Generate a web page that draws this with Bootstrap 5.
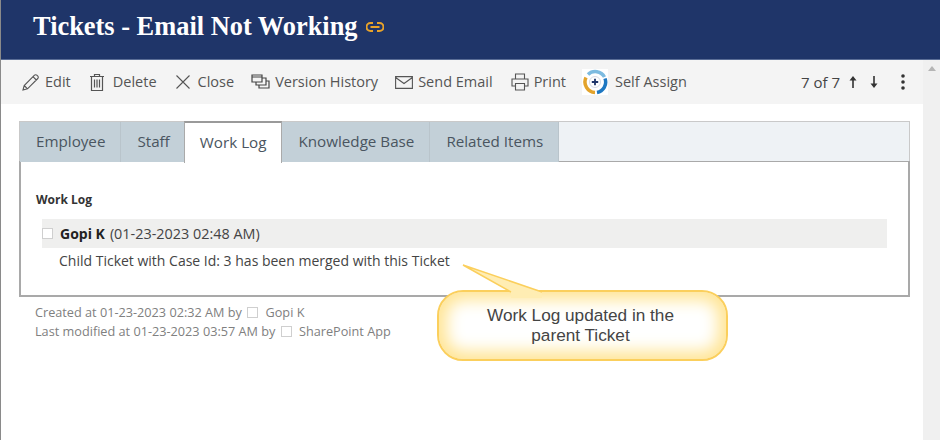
<!DOCTYPE html>
<html lang="en">
<head>
  <meta charset="UTF-8">
  <meta name="viewport" content="width=device-width, initial-scale=1.0">
  <title>Tickets - Email Not Working</title>
  <link href="https://cdn.jsdelivr.net/npm/bootstrap@5.3.3/dist/css/bootstrap.min.css" rel="stylesheet" crossorigin="anonymous">
  <script src="https://cdn.jsdelivr.net/npm/bootstrap@5.3.3/dist/js/bootstrap.bundle.min.js" crossorigin="anonymous"></script>
  <style>
    html, body { height: 440px; overflow: hidden; }
    body { font-family: "Open Sans", "Liberation Sans", sans-serif; color: #444; background: #fff; border-left: 1px solid #8a8a8a; position: relative; }
    .title-bar { height: 60px; background: #1f3569; padding: 0 0 5px 32px; border-bottom: 1px solid #5a6d96; }
    .title-bar h1 { font-family: "Liberation Serif", serif; font-weight: 700; font-size: 26.4px; color: #fff; margin: 0 8px 0 0; }
    .page-wrap { height: 380px; }
    .page-main { width: 922px; }
    .side-scroll { width: 17px; background: #f0f0f0; }
    .scroll-up { width: 0; height: 0; border: 4px solid transparent; border-top: 0; border-bottom: 5px solid #b5b5b5; margin: 6px auto 0; }
    .tool-bar { height: 44px; background: #f4f4f4; padding: 0 18px 0 20px; font-size: 14.5px; color: #555; }
    .tool-item { margin-right: 18px; line-height: 1; white-space: nowrap; }
    .tool-item.tight { margin-right: 17px; }
    .tool-item.tighter { margin-right: 16px; }
    .tool-item svg { margin-right: 5px; }
    .tool-item svg.wide-gap { margin-right: 8px; }
    .tool-item svg.mid-gap { margin-right: 7px; }
    .pager { font-size: 15px; color: #444; }
    .pager svg { margin-left: 13px; }
    .pager svg.up-arrow { margin-left: 9px; }
    .pager svg.more-dots { margin-left: 23px; }
    .tab-area { margin: 17px 13px 0 18px; }
    .tab-strip { height: 41px; background: #eef2f5; border: 1px solid #c9c9c9; border-bottom: 0; }
    .tab-btn { background: #c3d0d8; color: #4a5560; font-size: 15.2px; height: 40px; border-right: 1px solid #b9c4cb; padding: 0 15px 2px 16px; }
    .tab-btn.on { background: #fff; border-top: 2px solid #9a9a9a; border-left: 1px solid #aaa; border-right: 1px solid #aaa; margin: -1px 0 0 -2px; height: 42px; position: relative; z-index: 1; padding: 0 15px 2px 15px; }
    .tab-panel { height: 136px; border: 2px solid #a9a9a9; border-top-width: 1px; padding: 29px 21px 0 15px; margin-top: -1px; }
    .log-head { font-size: 12px; font-weight: 700; color: #333; margin-bottom: 11px; line-height: 17px; }
    .log-row { height: 29px; background: #efefee; margin-left: 6px; font-size: 14.4px; color: #444; }
    .log-row b { color: #222; font-size: 14px; margin-right: 5px; }
    .pic-box { width: 11px; height: 11px; border: 1px solid #cfcfcf; background: #fff; display: inline-block; }
    .log-row .pic-box { margin-right: 7px; }
    .log-text { font-size: 14px; margin: 4px 0 0 23px; line-height: 18px; color: #444; }
    .meta-info { margin: 6px 0 0 16px; font-size: 12.7px; color: #808080; line-height: 19px; }
    .meta-info .pic-box { margin: 0 4px 0 2px; vertical-align: -1px; }
    .callout-box { position: absolute; left: 436px; top: 290px; width: 291px; height: 71px; border: 2px solid #fbcf5c; border-radius: 26px; background: #fff; box-shadow: inset 0 0 16px 8px #ffe596; font-family: "Liberation Sans", sans-serif; font-size: 17.2px; line-height: 20px; color: #444; text-align: center; padding: 13px 34px 0 30px; }
    .callout-tail { position: absolute; left: 455px; top: 260px; }
  </style>
</head>
<body>
  <div class="title-bar d-flex align-items-center">
    <h1>Tickets - Email Not Working</h1>
    <svg width="18" height="10" viewBox="0 0 18 10" fill="none" stroke="#e8a32a" stroke-width="2"><path d="M7 1H4.500a4 4 0 0 0 0 8H7M11 1h2.500a4 4 0 0 1 0 8H11M4.500 5h9"/></svg>
  </div>
  <div class="d-flex page-wrap">
    <div class="page-main">
      <div class="tool-bar d-flex align-items-center">
        <span class="tool-item d-flex align-items-center">
          <svg width="19" height="19" viewBox="0 0 19 19" fill="none" stroke="#555" stroke-width="1.1"><path d="M2 17l1.200-4.500L13.500 2.200a1.600 1.600 0 0 1 2.300 0l1 1a1.600 1.600 0 0 1 0 2.300L6.500 15.800zM3.200 12.500l3.300 3.300M12 3.700l3.300 3.300"/></svg>Edit</span>
        <span class="tool-item d-flex align-items-center">
          <svg class="wide-gap" width="16" height="19" viewBox="0 0 16 19" fill="none" stroke="#555" stroke-width="1.2"><path d="M1 3.500h14M5.500 3.500V1.500h5v2M2.500 3.500v14h11v-14M5.500 6.500v8M8 6.500v8M10.500 6.500v8"/></svg>Delete</span>
        <span class="tool-item tight d-flex align-items-center">
          <svg class="mid-gap" width="16" height="16" viewBox="0 0 16 16" fill="none" stroke="#555" stroke-width="1.1"><path d="M1.500 1.500l13 13M14.500 1.500l-13 13"/></svg>Close</span>
        <span class="tool-item tight d-flex align-items-center">
          <svg width="19" height="16" viewBox="0 0 19 16" fill="none" stroke="#444" stroke-width="1.200"><path d="M1 1h10v7H1zM1 3h10M5 8v3h10V4h-4M8 11v3h10V7h-3"/></svg>Version History</span>
        <span class="tool-item d-flex align-items-center">
          <svg width="18" height="13" viewBox="0 0 18 13" fill="none" stroke="#555" stroke-width="1.100"><path d="M.6.6h16.800v11.800H.6zM.6 1.500L9 7.500l8.400-6"/></svg>Send Email</span>
        <span class="tool-item tighter d-flex align-items-center">
          <svg width="18" height="18" viewBox="0 0 18 18" fill="none" stroke="#555" stroke-width="1.100"><path d="M4.500 6V1h9v5M4.500 13H1V6h16v7h-3.500M4.500 10.500h9V17h-9z"/></svg>Print</span>
        <span class="tool-item d-flex align-items-center">
          <svg class="mid-gap" width="26" height="26" viewBox="0 0 26 26" fill="none"><rect width="26" height="26" fill="#fff"/><path d="M6 5.500A10.500 10.500 0 0 1 22.500 8" stroke="#7dbbe0" stroke-width="3.500"/><path d="M23 9.500A10.500 10.500 0 0 1 15 23.500" stroke="#1e78c2" stroke-width="3.500"/><path d="M13 23.500A10.500 10.500 0 0 1 4 8.500" stroke="#e3a32b" stroke-width="3.500"/><circle cx="13" cy="13" r="5.500" fill="#fff" stroke="#d6dbe6"/><path d="M13 9.800v6.400M9.800 13h6.400" stroke="#1f3569" stroke-width="1.800"/></svg>Self Assign</span>
        <span class="pager ms-auto d-flex align-items-center">
          7 of 7
          <svg class="up-arrow" width="8" height="12" viewBox="0 0 8 12" fill="#333"><path d="M4 0L7.500 4.500H4.800V12H3.200V4.500H.5z"/></svg>
          <svg width="8" height="12" viewBox="0 0 8 12" fill="#333"><path d="M4 12L7.500 7.500H4.800V0H3.200V7.500H.5z"/></svg>
          <svg class="more-dots" width="4" height="16" viewBox="0 0 4 16" fill="#333"><circle cx="2" cy="2" r="1.800"/><circle cx="2" cy="8" r="1.800"/><circle cx="2" cy="14" r="1.800"/></svg>
        </span>
      </div>
      <div class="tab-area">
        <div class="tab-strip d-flex">
          <div class="tab-btn d-flex align-items-center">Employee</div>
          <div class="tab-btn d-flex align-items-center">Staff</div>
          <div class="tab-btn on d-flex align-items-center">Work Log</div>
          <div class="tab-btn d-flex align-items-center">Knowledge Base</div>
          <div class="tab-btn d-flex align-items-center">Related Items</div>
        </div>
        <div class="tab-panel">
          <div class="log-head">Work Log</div>
          <div class="log-row d-flex align-items-center"><span class="pic-box"></span><b>Gopi K</b> (01-23-2023 02:48 AM)</div>
          <div class="log-text">Child Ticket with Case Id: 3 has been merged with this Ticket</div>
        </div>
        <div class="meta-info">
          <div>Created at 01-23-2023 02:32 AM by <span class="pic-box"></span> Gopi K</div>
          <div>Last modified at 01-23-2023 03:57 AM by <span class="pic-box"></span> SharePoint App</div>
        </div>
      </div>
    </div>
    <div class="side-scroll"><div class="scroll-up"></div></div>
  </div>
  <div class="callout-box">Work Log updated in the parent Ticket</div>
  <svg class="callout-tail" width="95" height="40" viewBox="0 0 95 40"><path d="M7 5L55 32V38H86V32z" fill="#ffedb3"/><path d="M55 32L7 5L86 32" fill="none" stroke="#fbcf5c" stroke-width="1.500"/></svg>
</body>
</html>
